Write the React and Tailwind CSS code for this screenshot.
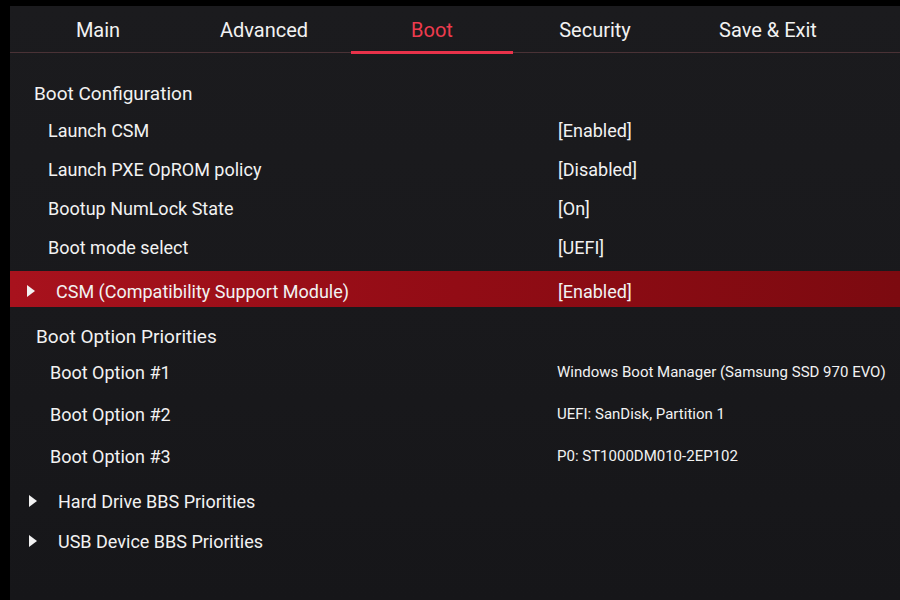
import React from "react";

const TABS = [
  { label: "Main", w: "w-[166px]" },
  { label: "Advanced", w: "w-[166px]" },
  { label: "Boot", w: "w-[162px]", active: true },
  { label: "Security", w: "w-[164px]" },
  { label: "Save & Exit", w: "w-[182px]" },
];

const CONFIG = [
  ["Launch CSM", "[Enabled]"],
  ["Launch PXE OpROM policy", "[Disabled]"],
  ["Bootup NumLock State", "[On]"],
  ["Boot mode select", "[UEFI]"],
];

const BOOT_OPTIONS = [
  ["Boot Option #1", "Windows Boot Manager (Samsung SSD 970 EVO)"],
  ["Boot Option #2", "UEFI: SanDisk, Partition 1"],
  ["Boot Option #3", "P0: ST1000DM010-2EP102"],
];

function Arrow() {
  return (
    <svg width="8" height="12" viewBox="0 0 8 12" className="shrink-0">
      <path d="M0 0 L8 6 L0 12 Z" fill="#f2f2f2" />
    </svg>
  );
}

export default function App() {
  return (
    <div
      className="w-[900px] h-[600px] bg-black pt-[6px] pl-[10px] overflow-hidden text-[#f2f2f2]"
      style={{ fontFamily: "Roboto, 'Noto Sans', sans-serif" }}
    >
      <div className="h-full flex flex-col bg-gradient-to-b from-[#1b1b1e] via-[#19191c] to-[#161619]">
        {/* tab bar */}
        <div className="h-[47px] flex items-stretch pl-[5px] border-b border-[#4a3236]">
          {TABS.map((t) => (
            <div
              key={t.label}
              className={`${t.w} flex items-center justify-center pt-[2px] text-[20px] ${
                t.active ? "text-[#ee3b4e] border-b-[3px] border-[#e8324a] -mb-[2px] ml-[4px]" : ""
              }`}
            >
              {t.label}
            </div>
          ))}
        </div>

        {/* Boot Configuration */}
        <div className="mt-[24px] h-[34px] flex items-center pl-[24px] text-[19px]">
          Boot Configuration
        </div>
        {CONFIG.map(([k, v]) => (
          <div key={k} className="h-[39px] flex items-center text-[18px]">
            <span className="w-[548px] pl-[38px]">{k}</span>
            <span>{v}</span>
          </div>
        ))}

        {/* highlighted row */}
        <div className="mt-[4px] h-[36px] flex items-center pt-[4px] text-[18px] bg-gradient-to-r from-[#a8121d] via-[#920c15] to-[#7c0a10]">
          <span className="w-[548px] pl-[17px] flex items-center gap-[21px]">
            <Arrow />
            CSM (Compatibility Support Module)
          </span>
          <span>[Enabled]</span>
        </div>

        {/* Boot Option Priorities */}
        <div className="mt-[16px] h-[28px] flex items-center pl-[26px] text-[19px]">
          Boot Option Priorities
        </div>
        {BOOT_OPTIONS.map(([k, v]) => (
          <div key={k} className="h-[42px] flex items-center">
            <span className="w-[547px] pl-[40px] text-[18px]">{k}</span>
            <span className="text-[15px]">{v}</span>
          </div>
        ))}

        <div className="mt-[4px]">
          {["Hard Drive BBS Priorities", "USB Device BBS Priorities"].map((s) => (
            <div key={s} className="h-[40px] flex items-center gap-[21px] pl-[19px] text-[18px]">
              <Arrow />
              {s}
            </div>
          ))}
        </div>
      </div>
    </div>
  );
}
